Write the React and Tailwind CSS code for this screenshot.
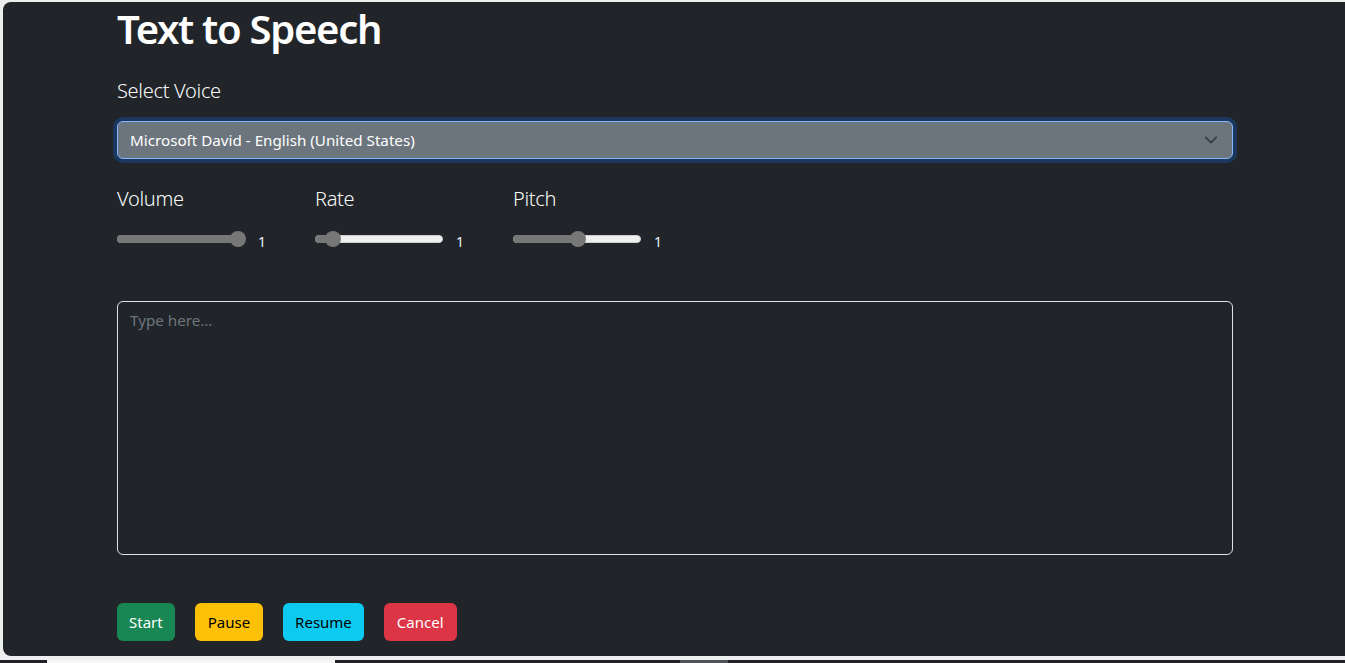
import React from "react";

const font = { fontFamily: '"Noto Sans", "Open Sans", sans-serif' };

function Slider({ pct, label }) {
  const left = 8 + pct * 112;
  return (
    <div className="flex w-[198px] flex-col">
      <div className="text-[20px] font-light leading-[30px] tracking-[-0.3px] text-[#f8f9fa]">{label}</div>
      <div className="mt-[15px] flex items-center">
        <div className="relative h-[8px] w-[128px] rounded-full border border-[#d0d0d0] bg-[#efefef]">
          <div
            className="absolute left-[-1px] top-[-1px] h-[8px] rounded-full bg-[#777777]"
            style={{ width: left + 1 }}
          />
          <div
            className="absolute top-[-5px] h-[16px] w-[16px] rounded-full bg-[#777777]"
            style={{ left: left - 8 }}
          />
        </div>
        <span className="ml-[13px] mt-[6px] text-[14px] leading-none text-[#e8f0ff]">1</span>
      </div>
    </div>
  );
}

export default function App() {
  return (
    <div className="flex h-[663px] w-[1345px] flex-col overflow-hidden bg-[#eeeeee]" style={font}>
      <div className="ml-[3px] mt-[2px] h-[654px] w-[1345px] shrink-0 rounded-l-[8px] bg-[#212529]">
        <div className="ml-[114px] w-[1116px] pt-[4px]">
          <h1 className="text-[40px] font-semibold leading-[46px] tracking-[-1.3px] text-white">Text to Speech</h1>
          <div className="mt-[24px] text-[20px] font-light leading-[30px] tracking-[-0.3px] text-[#f8f9fa]">Select Voice</div>
          <div className="mt-[15px] flex h-[38px] items-center justify-between rounded-[6px] border border-[#86b7fe] bg-[#6c757d] pl-[12px] pr-[14px] shadow-[0_0_0_4px_rgba(13,110,253,0.25)]">
            <span className="text-[15.2px] text-white">Microsoft David - English (United States)</span>
            <svg width="14" height="14" viewBox="0 0 16 16" fill="none">
              <path d="M2 5l6 6 6-6" stroke="#343a40" strokeWidth="1.8" strokeLinecap="round" strokeLinejoin="round" />
            </svg>
          </div>
          <div className="mt-[25px] flex">
            <Slider label="Volume" pct={1} />
            <Slider label="Rate" pct={0.08} />
            <Slider label="Pitch" pct={0.5} />
          </div>
          <div className="mt-[52px] h-[254px] rounded-[6px] border border-[#dee2e6] px-[12px] py-[6px]">
            <span className="text-[15.2px] text-[#6c757d]">Type here...</span>
          </div>
          <div className="mt-[48px] flex gap-[20px]">
            <button className="h-[38px] rounded-[6px] bg-[#198754] px-[12px] text-[15px] text-white">Start</button>
            <button className="h-[38px] rounded-[6px] bg-[#ffc107] px-[13px] text-[15px] text-black">Pause</button>
            <button className="h-[38px] rounded-[6px] bg-[#0dcaf0] px-[12px] text-[15px] text-black">Resume</button>
            <button className="h-[38px] rounded-[6px] bg-[#dc3545] px-[13px] text-[15px] text-white">Cancel</button>
          </div>
        </div>
      </div>
      <div className="mt-[4px] flex h-[3px] w-full bg-[#202124]">
        <div className="w-[47px]" />
        <div className="w-[288px] bg-[#f5f5f5]" />
        <div className="w-[345px]" />
        <div className="w-[48px] bg-[#4f5357]" />
      </div>
    </div>
  );
}
